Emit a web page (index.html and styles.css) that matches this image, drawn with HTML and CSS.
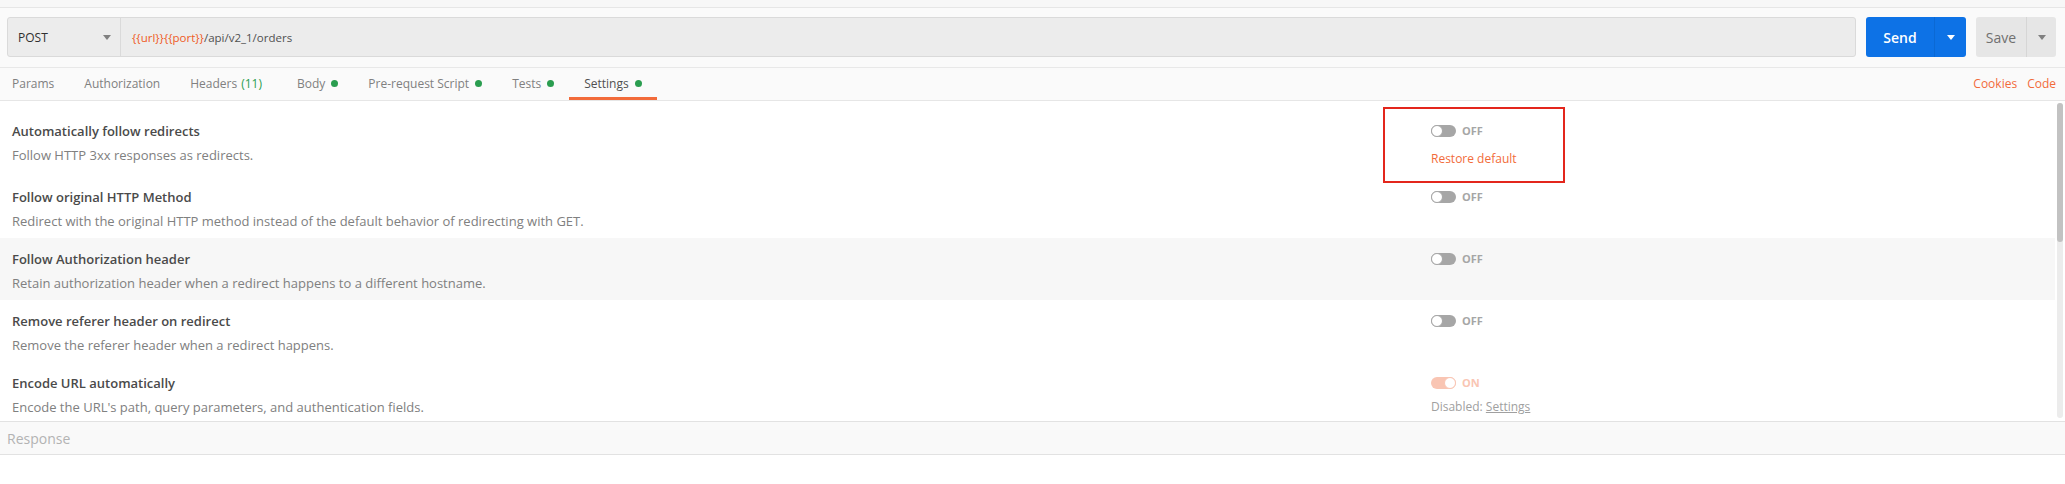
FILE: index.html
```html
<!DOCTYPE html>
<html lang="en">
<head>
  <meta charset="UTF-8">
  <meta name="viewport" content="width=device-width, initial-scale=1.0">
  <title>Request Settings</title>
  <link rel="stylesheet" href="styles.css">
</head>
<body>
  <div class="top-strip"></div>

  <div class="request-bar">
    <div class="url-group">
      <div class="method">POST<span class="caret"></span></div>
      <div class="url"><span class="var">{{url}}</span><span class="var">{{port}}</span>/api/v2_1/orders</div>
    </div>
    <div class="btn btn-send">
      <span class="btn-label">Send</span>
      <span class="btn-caret"><span class="caret caret-white"></span></span>
    </div>
    <div class="btn btn-save">
      <span class="btn-label">Save</span>
      <span class="btn-caret"><span class="caret"></span></span>
    </div>
  </div>

  <div class="tabs">
    <div class="tab-list">
      <div class="tab">Params</div>
      <div class="tab">Authorization</div>
      <div class="tab tab-headers">Headers <span class="count">(11)</span></div>
      <div class="tab">Body<span class="dot"></span></div>
      <div class="tab">Pre-request Script<span class="dot"></span></div>
      <div class="tab">Tests<span class="dot"></span></div>
      <div class="tab active">Settings<span class="dot"></span></div>
    </div>
    <div class="tab-links">
      <span class="link">Cookies</span>
      <span class="link">Code</span>
    </div>
  </div>

  <div class="settings">
    <div class="settings-list">
      <div class="setting">
        <div class="setting-text">
          <div class="setting-title">Automatically follow redirects</div>
          <div class="setting-desc">Follow HTTP 3xx responses as redirects.</div>
        </div>
        <div class="setting-control">
          <div class="toggle-line"><span class="switch"><span class="knob"></span></span><span class="switch-label">OFF</span></div>
          <div class="restore">Restore default</div>
        </div>
      </div>

      <div class="setting">
        <div class="setting-text">
          <div class="setting-title">Follow original HTTP Method</div>
          <div class="setting-desc">Redirect with the original HTTP method instead of the default behavior of redirecting with GET.</div>
        </div>
        <div class="setting-control">
          <div class="toggle-line"><span class="switch"><span class="knob"></span></span><span class="switch-label">OFF</span></div>
        </div>
      </div>

      <div class="setting hover">
        <div class="setting-text">
          <div class="setting-title">Follow Authorization header</div>
          <div class="setting-desc">Retain authorization header when a redirect happens to a different hostname.</div>
        </div>
        <div class="setting-control">
          <div class="toggle-line"><span class="switch"><span class="knob"></span></span><span class="switch-label">OFF</span></div>
        </div>
      </div>

      <div class="setting">
        <div class="setting-text">
          <div class="setting-title">Remove referer header on redirect</div>
          <div class="setting-desc">Remove the referer header when a redirect happens.</div>
        </div>
        <div class="setting-control">
          <div class="toggle-line"><span class="switch"><span class="knob"></span></span><span class="switch-label">OFF</span></div>
        </div>
      </div>

      <div class="setting">
        <div class="setting-text">
          <div class="setting-title">Encode URL automatically</div>
          <div class="setting-desc">Encode the URL's path, query parameters, and authentication fields.</div>
        </div>
        <div class="setting-control">
          <div class="toggle-line disabled"><span class="switch on"><span class="knob"></span></span><span class="switch-label">ON</span></div>
          <div class="disabled-note">Disabled: <span class="underline">Settings</span></div>
        </div>
      </div>

      <div class="highlight"></div>
    </div>
    <div class="scrollbar"><div class="scroll-thumb"></div></div>
  </div>

  <div class="response">Response</div>
</body>
</html>
```

FILE: styles.css
```css
body {
  margin: 0;
  font-family: "Open Sans", "Liberation Sans", sans-serif;
  font-size: 12px;
  color: #505050;
  background-color: #fff;
}

.top-strip {
  height: 7px;
  background-color: #f7f7f7;
  border-bottom: 1px solid #e6e6e6;
}

/* request bar */
.request-bar {
  display: flex;
  gap: 10px;
  padding: 9px 9px 10px 7px;
  background-color: #fafafa;
  border-bottom: 1px solid #e8e8e8;
}
.url-group {
  flex: 1;
  display: flex;
  height: 40px;
  box-sizing: border-box;
  background-color: #ececec;
  border: 1px solid #dadada;
  border-radius: 3px;
}
.method {
  width: 113px;
  box-sizing: border-box;
  display: flex;
  align-items: center;
  justify-content: space-between;
  padding: 0 9px 0 10px;
  border-right: 1px solid #dadada;
  color: #303030;
}
.url {
  display: flex;
  align-items: center;
  padding-left: 11px;
  font-size: 11.5px;
  color: #505050;
}
.var {
  color: #ef5b25;
}
.caret {
  width: 0;
  height: 0;
  border-left: 4px solid transparent;
  border-right: 4px solid transparent;
  border-top: 5px solid #808080;
}
.caret-white {
  border-top-color: #fff;
}
.btn {
  display: flex;
  height: 40px;
  border-radius: 3px;
  font-size: 14px;
}
.btn-label {
  display: flex;
  align-items: center;
  justify-content: center;
}
.btn-caret {
  display: flex;
  align-items: center;
  justify-content: center;
}
.btn-send {
  width: 100px;
  background-color: #0d72e6;
  color: #fff;
  font-weight: 600;
}
.btn-send .btn-label {
  width: 68px;
}
.btn-send .btn-caret {
  flex: 1;
  border-left: 1px solid rgba(0, 0, 0, 0.08);
}
.btn-save {
  width: 80px;
  background-color: #e6e6e6;
  color: #707070;
}
.btn-save .btn-label {
  width: 50px;
}
.btn-save .btn-caret {
  flex: 1;
  border-left: 1px solid #d6d6d6;
}

/* tabs */
.tabs {
  display: flex;
  justify-content: space-between;
  height: 32px;
  background-color: #fafafa;
  border-bottom: 1px solid #e6e6e6;
}
.tab-list {
  display: flex;
  margin-left: -3px;
}
.tab {
  display: flex;
  align-items: center;
  padding: 1px 15px 0;
  box-sizing: border-box;
  height: 32px;
  border-bottom: 3px solid transparent;
  color: #808080;
}
.tab-headers {
  padding-right: 20px;
}
.tab.active {
  color: #505050;
  border-bottom-color: #f26b3a;
}
.count {
  color: #2a9d4f;
  margin-left: 4px;
}
.dot {
  width: 7px;
  height: 7px;
  border-radius: 50%;
  background-color: #2a9d4f;
  margin-left: 6px;
}
.tab-links {
  display: flex;
  align-items: center;
  gap: 10px;
  padding-right: 9px;
  padding-bottom: 2px;
}
.link {
  color: #f26b3a;
}

/* settings */
.settings {
  display: flex;
  height: 320px;
  overflow: hidden;
}
.settings-list {
  flex: 1;
  position: relative;
  padding-top: 9px;
}
.setting {
  display: grid;
  grid-template-columns: 1419px 1fr;
  padding: 13px 0 9px 12px;
  line-height: 16px;
}
.setting.hover {
  background-color: #f7f7f7;
}
.setting-title {
  font-size: 13px;
  font-weight: 600;
  color: #4a4a4a;
}
.setting-desc {
  margin-top: 8px;
  font-size: 13px;
  color: #808080;
}
.toggle-line {
  display: flex;
  align-items: center;
  gap: 6px;
  height: 16px;
}
.switch {
  display: flex;
  width: 25px;
  height: 12px;
  border-radius: 6px;
  background-color: #a6a6a6;
}
.knob {
  width: 12px;
  height: 12px;
  box-sizing: border-box;
  border-radius: 50%;
  background-color: #fff;
  border: 1px solid #a6a6a6;
}
.switch.on {
  justify-content: flex-end;
  background-color: #f9c5b3;
}
.switch.on .knob {
  border-color: #f9c5b3;
}
.switch-label {
  font-size: 11px;
  font-weight: 700;
  color: #a6a6a6;
}
.disabled .switch-label {
  color: #f9c5b3;
}
.restore {
  margin-top: 12px;
  color: #f26b3a;
}
.disabled-note {
  margin-top: 8px;
  color: #a0a0a0;
}
.underline {
  text-decoration: underline;
}
.highlight {
  position: absolute;
  top: 6px;
  left: 1383px;
  width: 182px;
  height: 76px;
  box-sizing: border-box;
  border: 2px solid #e3261c;
}
.scrollbar {
  width: 6px;
  margin: 2px 2px 3px 2px;
  border-radius: 3px;
  background-color: #ececec;
}
.scroll-thumb {
  height: 139px;
  border-radius: 3px;
  background-color: #c2c2c2;
}

/* response */
.response {
  height: 32px;
  display: flex;
  align-items: center;
  padding-left: 7px;
  font-size: 14px;
  color: #b3b3b3;
  background-color: #f9f9f9;
  border-top: 1px solid #e2e2e2;
  border-bottom: 1px solid #e2e2e2;
}
```
